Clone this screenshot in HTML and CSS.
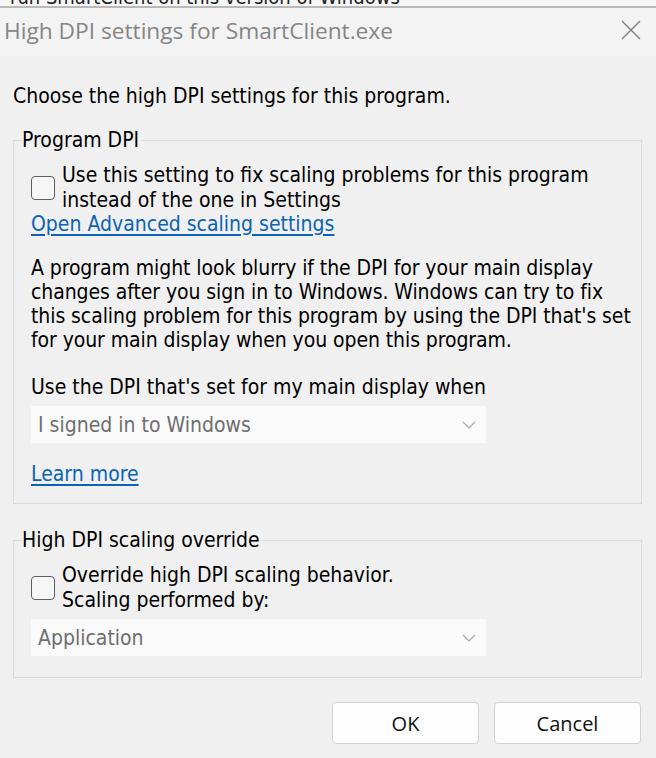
FILE: index.html
```html
<!DOCTYPE html>
<html lang="en">
<head>
    <meta charset="UTF-8">
    <meta name="viewport" content="width=device-width, initial-scale=1.0">
    <title>High DPI settings for SmartClient.exe</title>
    <link rel="stylesheet" href="styles.css">
</head>
<body>
    <div class="behind"><span>run SmartClient on this version of Windows</span></div>

    <div class="titlebar">
        <div class="title">High DPI settings for SmartClient.exe</div>
        <div class="close">
            <svg width="20" height="20" viewBox="0 0 20 20">
                <path d="M1 1 L19 19 M19 1 L1 19" stroke="#7f7f7f" stroke-width="1.4" fill="none"/>
            </svg>
        </div>
    </div>

    <div class="content">
        <div class="intro">Choose the high DPI settings for this program.</div>

        <fieldset class="group group-program">
            <legend>Program DPI</legend>
            <label class="check">
                <span class="box"></span>
                <span class="check-text">Use this setting to fix scaling problems for this program<br>instead of the one in Settings</span>
            </label>
            <a class="link" href="#">Open Advanced scaling settings</a>
            <p class="note">A program might look blurry if the DPI for your main display<br>changes after you sign in to Windows. Windows can try to fix<br>this scaling problem for this program by using the DPI that's set<br>for your main display when you open this program.</p>
            <div class="field-label">Use the DPI that's set for my main display when</div>
            <div class="select">
                <span>I signed in to Windows</span>
                <svg class="chevron" width="14" height="8" viewBox="0 0 14 8">
                    <path d="M1 1 L7 7 L13 1" stroke="#a8a8a8" stroke-width="1.2" fill="none"/>
                </svg>
            </div>
            <a class="link learn" href="#">Learn more</a>
        </fieldset>

        <fieldset class="group group-override">
            <legend>High DPI scaling override</legend>
            <label class="check">
                <span class="box"></span>
                <span class="check-text">Override high DPI scaling behavior.<br>Scaling performed by:</span>
            </label>
            <div class="select">
                <span>Application</span>
                <svg class="chevron" width="14" height="8" viewBox="0 0 14 8">
                    <path d="M1 1 L7 7 L13 1" stroke="#a8a8a8" stroke-width="1.2" fill="none"/>
                </svg>
            </div>
        </fieldset>

        <div class="buttons">
            <button class="btn">OK</button>
            <button class="btn">Cancel</button>
        </div>
    </div>
</body>
</html>
```

FILE: styles.css
```css
body {
    margin: 0;
    width: 656px;
    height: 758px;
    overflow: hidden;
    background-color: #f0f0f0;
    font-family: "DejaVu Sans Condensed", "DejaVu Sans", sans-serif;
    font-size: 21px;
    color: #000;
}
.behind {
    height: 6px;
    overflow: hidden;
    background-color: #f6f6f6;
    border-bottom: 2px solid #b9b9b9;
    font-size: 20px;
    line-height: 20px;
    color: #222;
}
.behind span {
    display: block;
    margin-top: -13px;
    padding-left: 10px;
}
.titlebar {
    height: 48px;
    display: flex;
    align-items: center;
    justify-content: space-between;
    background-color: #f3f3f3;
    padding: 0 15px 0 4px;
}
.title {
    font-family: "Open Sans", "Noto Sans", sans-serif;
    font-size: 22.7px;
    color: #858585;
    margin-top: -3px;
}
.close {
    display: flex;
    margin-top: -4px;
}
.content {
    padding: 0 14px 0 13px;
}
.intro {
    line-height: 24px;
    margin-top: 28px;
}
.group {
    margin: 20px 0 0 0;
    padding: 11px 17px 17px 17px;
    border: 1px solid #dadada;
    min-width: 0;
}
.group legend {
    padding: 0 3px 0 0;
    margin-left: -9px;
    line-height: 24px;
}
.group-override {
    margin-top: 24px;
    padding-bottom: 21px;
}
.check {
    display: flex;
    align-items: center;
    gap: 7px;
    line-height: 24.5px;
}
.box {
    width: 22px;
    height: 22px;
    flex: none;
    border: 1px solid #5e5e5e;
    border-radius: 4px;
    background-color: #f6f6f6;
}
.link {
    display: block;
    width: max-content;
    line-height: 24px;
    color: #0b63b8;
    text-decoration: underline;
    text-underline-offset: 3px;
}
.note {
    margin: 20px 0 0 0;
    line-height: 24px;
    white-space: nowrap;
    letter-spacing: -0.08px;
}
.field-label {
    margin-top: 23px;
    line-height: 24px;
}
.select {
    margin-top: 7px;
    width: 455px;
    height: 37px;
    box-sizing: border-box;
    display: flex;
    align-items: center;
    justify-content: space-between;
    padding: 0 10px 0 7px;
    background-color: #fafafa;
    color: #6e6e6e;
}
.learn {
    margin-top: 19px;
}
.buttons {
    display: flex;
    justify-content: flex-end;
    gap: 15px;
    margin-top: 24px;
    padding-right: 1px;
}
.btn {
    width: 147px;
    height: 42px;
    font-family: "Open Sans", "Noto Sans", sans-serif;
    font-size: 20px;
    color: #111;
    background-color: #fdfdfd;
    border: 1px solid #d2d2d2;
    border-radius: 4px;
}
```
